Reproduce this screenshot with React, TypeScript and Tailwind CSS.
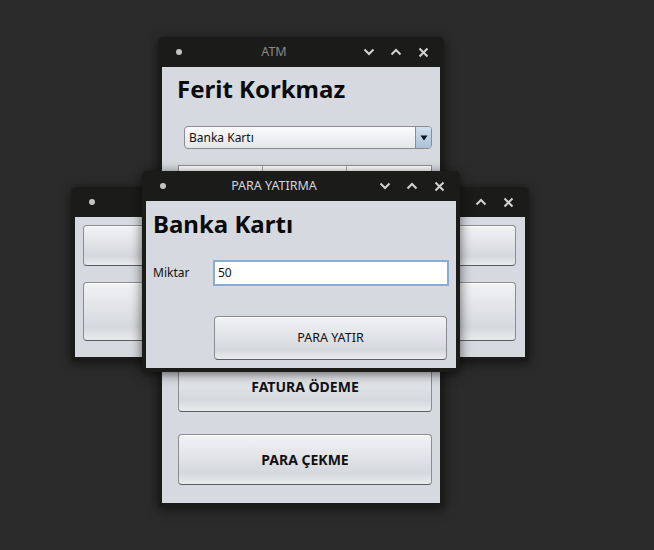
import React from "react";

const FONT = { fontFamily: '"Noto Sans", "Open Sans", sans-serif' };

function Chevron({ up }: { up?: boolean }) {
  return (
    <svg width="12" height="8" viewBox="0 0 12 8" className="block">
      <path
        d={up ? "M1.5 6.5 L6 2 L10.5 6.5" : "M1.5 1.5 L6 6 L10.5 1.5"}
        fill="none"
        stroke="#d2d2d2"
        strokeWidth="2"
      />
    </svg>
  );
}

function Cross() {
  return (
    <svg width="11" height="11" viewBox="0 0 11 11" className="block">
      <path d="M1.5 1.5 L9.5 9.5 M9.5 1.5 L1.5 9.5" fill="none" stroke="#d2d2d2" strokeWidth="2" />
    </svg>
  );
}

function Win({
  className,
  title,
  titleClass,
  children,
}: {
  className: string;
  title: string;
  titleClass: string;
  children: React.ReactNode;
}) {
  return (
    <div
      className={`absolute flex flex-col rounded-t-[5px] bg-[#1b1c1a] shadow-[0_2px_12px_rgba(0,0,0,0.6)] ${className}`}
    >
      <div className="flex h-[30px] shrink-0 items-center">
        <div className="flex w-[36px] shrink-0 items-center pl-[18px]">
          <span className="block h-[6px] w-[6px] rounded-full bg-[#c4c4c4]" />
        </div>
        <div className={`flex-1 truncate text-center text-[12.5px] ${titleClass}`}>{title}</div>
        <div className="flex w-[90px] shrink-0 items-center justify-end gap-[13px] pr-[14px]">
          <span className="flex w-[14px] justify-center"><Chevron /></span>
          <span className="flex w-[14px] justify-center"><Chevron up /></span>
          <span className="flex w-[14px] justify-center"><Cross /></span>
        </div>
      </div>
      <div className="mx-[4px] mb-[4px] flex flex-1 flex-col bg-[#d6d9df]">{children}</div>
    </div>
  );
}

const BTN =
  "flex items-center justify-center rounded-[4px] border border-[#8b8c90] border-b-[#5c5d61] bg-[linear-gradient(to_bottom,#f1f2f4_0%,#e3e5e9_40%,#d5d8dd_78%,#e9ebee_100%)] shadow-[inset_0_1px_0_#fbfbfc] text-[#111]";

export default function App() {
  return (
    <div className="relative h-[550px] w-[654px] overflow-hidden bg-[#2b2b2b]" style={FONT}>
      {/* ATM window */}
      <Win className="left-[158px] top-[37px] h-[470px] w-[286px]" title="ATM" titleClass="text-[#8a8a8a]">
        <div className="flex flex-1 flex-col pt-[7px] pb-[18px] pl-[16px] pr-[8px]">
          <div className="-ml-[1px] h-[30px] text-[24px] font-bold leading-[30px] text-[#0a0a0a]">Ferit Korkmaz</div>
          <div className="mt-[22px] ml-[6px] flex h-[23px] items-stretch rounded-[4px] border border-[#8b8c90] bg-[linear-gradient(to_bottom,#fbfbfc,#e4e6ea)]">
            <div className="flex flex-1 items-center pl-[4px] text-[12px] text-[#111]">Banka Kartı</div>
            <div className="flex w-[16px] items-center justify-center rounded-r-[3px] border-l border-[#8b8c90] bg-[linear-gradient(to_bottom,#d3e0ee,#a9c1d9)]">
              <svg width="8" height="6" viewBox="0 0 8 6">
                <path d="M0.5 0.5 L7.5 0.5 L4 5.5 Z" fill="#111" />
              </svg>
            </div>
          </div>
          <div className="mt-[16px] flex h-[174px] flex-col border border-[#8f9094] bg-white">
            <div className="grid h-[24px] grid-cols-3 border-b border-[#b5b6b9]">
              <div className="border-r border-[#a9aaad]" />
              <div className="border-r border-[#a9aaad]" />
              <div />
            </div>
          </div>
          <div className={`${BTN} mt-[22px] h-[51px] text-[14px] font-bold`}>FATURA ÖDEME</div>
          <div className={`${BTN} mt-[22px] h-[51px] text-[14px] font-bold`}>PARA ÇEKME</div>
        </div>
      </Win>

      {/* background window */}
      <Win className="left-[71px] top-[187px] h-[174px] w-[458px]" title="" titleClass="text-[#8a8a8a]">
        <div className="grid flex-1 grid-cols-2 grid-rows-[41px_59px] gap-x-[8px] gap-y-[16px] pt-[8px] pb-[16px] pl-[8px] pr-[9px]">
          <div className={BTN} />
          <div className={BTN} />
          <div className={BTN} />
          <div className={BTN} />
        </div>
      </Win>

      {/* front window */}
      <Win className="left-[142px] top-[171px] h-[201px] w-[318px]" title="PARA YATIRMA" titleClass="text-[#d6d6d6]">
        <div className="flex flex-1 flex-col pt-[8px] pl-[7px] pr-[7px]">
          <div className="h-[30px] text-[24px] font-bold leading-[30px] text-[#0a0a0a]">Banka Kartı</div>
          <div className="mt-[21px] flex items-center">
            <div className="w-[60px] text-[12px] text-[#111]">Miktar</div>
            <div className="flex h-[26px] flex-1 items-center border-2 border-[#88acd6] bg-white pl-[3px] text-[12px] text-[#111]">
              50
            </div>
          </div>
          <div className={`${BTN} mt-[30px] ml-[61px] mr-[2px] h-[44px] text-[12.5px]`}>PARA YATIR</div>
        </div>
      </Win>
    </div>
  );
}
